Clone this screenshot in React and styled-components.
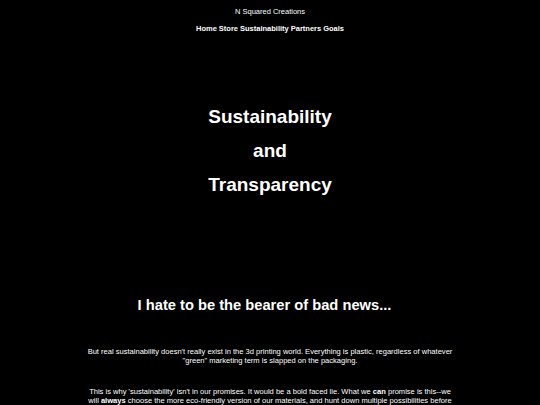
import React from "react";
import styled, { createGlobalStyle } from "styled-components";

const GlobalStyle = createGlobalStyle`
  html, body {
    margin: 0;
    padding: 0;
    background: #000000;
  }
  body {
    color: #ffffff;
    font-family: "Liberation Sans", Arial, sans-serif;
    font-size: 7.5px;
  }
`;

const Page = styled.div`
  min-height: 405px;
  display: flex;
  flex-direction: column;
  align-items: center;
  text-align: center;
  overflow: hidden;
`;

const Header = styled.header`
  display: flex;
  flex-direction: column;
  align-items: center;
  padding-top: 7px;
  .brand {
    margin: 0;
    line-height: 9px;
  }
`;

const Nav = styled.nav`
  display: flex;
  gap: 2px;
  margin-top: 8px;
  line-height: 9px;
  a {
    color: #ffffff;
    font-weight: bold;
    text-decoration: none;
  }
`;

const Title = styled.h1`
  margin: 67px 0 0;
  font-size: 19px;
  line-height: 34px;
  font-weight: bold;
`;

const Subtitle = styled.h2`
  margin: 95px 0 0;
  padding-right: 11px;
  font-size: 14.7px;
  line-height: 17px;
  font-weight: bold;
`;

const Text = styled.p`
  width: 372px;
  margin: ${(p) => p.$top}px 0 0;
  font-size: 7.56px;
  line-height: 9px;
  b {
    font-weight: bold;
  }
`;

const links = ["Home", "Store", "Sustainability", "Partners", "Goals"];

const App = () => {
  return (
    <Page>
      <GlobalStyle />
      <Header>
        <p className="brand">N Squared Creations</p>
        <Nav>
          {links.map((l) => (
            <a key={l} href="#">
              {l}
            </a>
          ))}
        </Nav>
      </Header>
      <Title>
        Sustainability
        <br />
        and
        <br />
        Transparency
      </Title>
      <Subtitle>I hate to be the bearer of bad news...</Subtitle>
      <Text $top={33}>
        But real sustainability doesn't really exist in the 3d printing world.
        Everything is plastic, regardless of whatever "green" marketing term is
        slapped on the packaging.
      </Text>
      <Text $top={22}>
        This is why 'sustainability' isn't in our promises. It would be a bold
        faced lie. What we <b>can</b> promise is this--we will <b>always</b>{" "}
        choose the more eco-friendly version of our materials, and hunt down
        multiple possibilities before settling on one.
      </Text>
    </Page>
  );
};

export default App;
